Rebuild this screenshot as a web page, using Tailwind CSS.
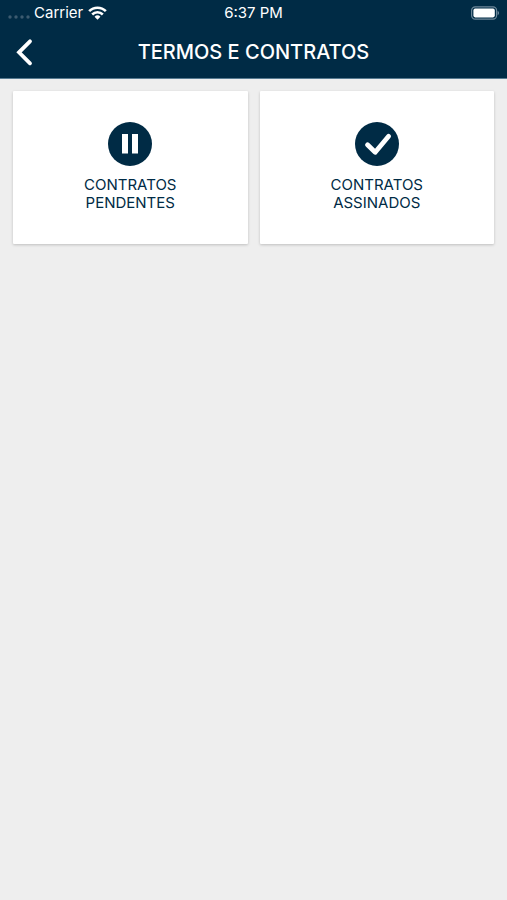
<!DOCTYPE html>
<html lang="pt-BR">

<head>
  <meta charset="UTF-8" />
  <meta name="viewport" content="width=device-width, initial-scale=1" />
  <title>Termos e Contratos</title>
  <script src="https://cdn.jsdelivr.net/npm/@tailwindcss/browser@4"></script>
</head>

<body class="min-h-screen bg-[#eeeeee] font-[Inter,sans-serif] text-[#002b45]">

  <header class="bg-[#002b45] text-white border-b border-[#577b91]">
    <!-- Barra de status -->
    <div class="grid grid-cols-3 items-center h-[26px] px-2 text-[15px]">
      <div class="flex items-center gap-1">
        <svg class="w-[22px] h-1 mt-2 fill-[#3c5b70]" viewBox="0 0 22 4" aria-hidden="true">
          <circle cx="2" cy="2" r="1.7" />
          <circle cx="8" cy="2" r="1.7" />
          <circle cx="14" cy="2" r="1.7" />
          <circle cx="20" cy="2" r="1.7" />
        </svg>
        <span>Carrier</span>
        <svg class="w-[19px] h-[14px] ml-px" viewBox="0 0 20 14" fill="none" stroke="currentColor" stroke-width="2.7" aria-hidden="true">
          <path d="M1.2 5.1a12.4 12.4 0 0 1 17.6 0" />
          <path d="M4.4 8.6a7.9 7.9 0 0 1 11.2 0" />
          <path d="M10 14 6.9 10.9a4.4 4.4 0 0 1 6.2 0z" fill="currentColor" stroke="none" />
        </svg>
      </div>
      <span class="text-center">6:37 PM</span>
      <svg class="w-[29px] h-[14px] justify-self-end" viewBox="0 0 29 14" aria-hidden="true">
        <rect x="1.6" y="0.8" width="25" height="12.4" rx="3.6" fill="none" stroke="#6d8799" stroke-width="1.2" />
        <rect x="3.4" y="2.6" width="21.4" height="8.8" rx="1.8" fill="#fff" />
        <path d="M27.6 5v4c1-.4 1.4-1.1 1.4-2s-.4-1.6-1.4-2z" fill="#6d8799" />
      </svg>
    </div>

    <!-- Barra de navegação -->
    <div class="grid grid-cols-[32px_1fr_32px] items-center h-[52px] px-2">
      <button type="button" aria-label="Voltar" class="flex items-center justify-center h-10">
        <svg class="w-5 h-7" viewBox="0 0 20 28" fill="none" stroke="currentColor" stroke-width="3.8" stroke-linecap="round" aria-hidden="true">
          <path d="M16 3.3 5 14.3l11 11" />
        </svg>
      </button>
      <h1 class="text-xl font-medium text-center">TERMOS E CONTRATOS</h1>
    </div>
  </header>

  <!-- Opções -->
  <main class="grid grid-cols-2 gap-3 px-[13px] py-3">
    <a href="#pendentes" class="flex flex-col items-center pt-[31px] pb-8 bg-white rounded-[1px] shadow-[0_1px_3px_rgba(0,0,0,0.2)]">
      <svg class="w-11 h-11" viewBox="0 0 44 44" aria-hidden="true">
        <circle cx="22" cy="22" r="22" fill="#002b45" />
        <path d="M14 12h6v19.5h-6zM24 12h6v19.5h-6z" fill="#fff" />
      </svg>
      <span class="mt-[10px] text-[15px] leading-[18px] text-center">CONTRATOS<br />PENDENTES</span>
    </a>
    <a href="#assinados" class="flex flex-col items-center pt-[31px] pb-8 bg-white rounded-[1px] shadow-[0_1px_3px_rgba(0,0,0,0.2)]">
      <svg class="w-11 h-11" viewBox="0 0 44 44" aria-hidden="true">
        <circle cx="22" cy="22" r="22" fill="#002b45" />
        <path d="m12.5 22.8 7.7 7.5L33.6 14.3" fill="none" stroke="#fff" stroke-width="4.8" stroke-linecap="round" stroke-linejoin="round" />
      </svg>
      <span class="mt-[10px] text-[15px] leading-[18px] text-center">CONTRATOS<br />ASSINADOS</span>
    </a>
  </main>

</body>

</html>
